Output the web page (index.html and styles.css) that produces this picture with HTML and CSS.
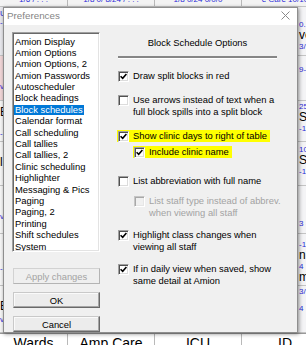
FILE: index.html
```html
<!DOCTYPE html>
<html>
<head>
<meta charset="utf-8">
<title>Preferences</title>
<link rel="stylesheet" href="styles.css">
</head>
<body>
<div class="page">
  <div class="row row-top">
    <div class="cell"><span class="sm">1/6 / . . .</span></div>
    <div class="cell"><span class="sm">1/8 0/ 8/24 / . . .</span></div>
    <div class="cell"><span class="sm">1/8 0/24 0/0/0</span></div>
    <div class="cell"><span class="sm">e Care 10/10</span></div>
  </div>
  <div class="row r1">
    <div class="cell c1 grey"><div class="sm pt2">Ur</div><div class="sm">-</div></div>
    <div class="cell"></div><div class="cell"></div>
    <div class="cell c4 p13"><div class="sm">0.</div><div class="big">ve</div><div class="sm">3/3</div></div>
  </div>
  <div class="row r2">
    <div class="cell c1 pink"><div class="sm pt26">v</div></div>
    <div class="cell"></div><div class="cell"></div>
    <div class="cell c4 p9"><div class="sm">9-</div></div>
  </div>
  <div class="row r3">
    <div class="cell c1"><div class="big pt5">E</div><div class="sm pt10">-</div></div>
    <div class="cell"></div><div class="cell"></div>
    <div class="cell c4 p1"><div class="sm">25</div><div class="big">S</div><div class="sm">-1</div></div>
  </div>
  <div class="row r4">
    <div class="cell c1"><div class="big pt14">l</div></div>
    <div class="cell"></div><div class="cell"></div>
    <div class="cell c4 p3"><div class="sm">10</div><div class="big">S</div><div class="sm">-1</div></div>
  </div>
  <div class="row r5">
    <div class="cell c1"><div class="sm pt26">v</div></div>
    <div class="cell"></div><div class="cell"></div>
    <div class="cell c4 p33"><div class="sm">3 -</div></div>
  </div>
  <div class="row r6">
    <div class="cell c1"><div class="sm pt30">-</div></div>
    <div class="cell"></div><div class="cell"></div>
    <div class="cell c4 p6"><div class="sm">-1</div><div class="big">n</div><div class="sm">4</div><div class="big">m</div></div>
  </div>
  <div class="row r7">
    <div class="cell c1"><div class="big pt14">E</div><div class="sm pt2">v</div></div>
    <div class="cell"></div><div class="cell"></div>
    <div class="cell c4 p1"><div class="sm">3/3</div><div class="sm pt8">4</div></div>
  </div>
  <div class="row row-bottom">
    <div class="cell"><span class="big2">Wards</span></div>
    <div class="cell"><span class="big2">Amp Care</span></div>
    <div class="cell"><span class="big2">ICU</span></div>
    <div class="cell"><span class="big2">ID</span></div>
  </div>
</div>

<div class="dialog">
  <div class="titlebar">
    <span class="title">Preferences</span>
    <svg class="close" width="9" height="9" viewBox="0 0 9 9"><path d="M0.5 0.5 L8.5 8.5 M8.5 0.5 L0.5 8.5" stroke="#8a8a8a" stroke-width="1" fill="none"/></svg>
  </div>
  <div class="dbody">
    <div class="left">
      <ul class="list">
        <li><span>Amion Display</span></li>
        <li><span>Amion Options</span></li>
        <li><span>Amion Options, 2</span></li>
        <li><span>Amion Passwords</span></li>
        <li><span>Autoscheduler</span></li>
        <li><span>Block headings</span></li>
        <li class="sel"><span>Block schedules</span></li>
        <li><span>Calendar format</span></li>
        <li><span>Call scheduling</span></li>
        <li><span>Call tallies</span></li>
        <li><span>Call tallies, 2</span></li>
        <li><span>Clinic scheduling</span></li>
        <li><span>Highlighter</span></li>
        <li><span>Messaging &amp; Pics</span></li>
        <li><span>Paging</span></li>
        <li><span>Paging, 2</span></li>
        <li><span>Printing</span></li>
        <li><span>Shift schedules</span></li>
        <li><span>System</span></li>
      </ul>
      <button class="btn btn-first disabled">Apply changes</button>
      <button class="btn">OK</button>
      <button class="btn">Cancel</button>
    </div>
    <div class="right">
      <div class="heading">Block Schedule Options</div>
      <div class="sep"></div>

      <div class="opt mt11"><span class="cb"><svg width="7" height="7" viewBox="0 0 7 7"><path d="M0.6 3.2 L2.7 5.3 L6.4 1.0" fill="none" stroke="#000" stroke-width="1.6"/></svg></span><span class="lbl">Draw split blocks in red</span></div>

      <div class="opt mt12"><span class="cb"></span><span class="lbl">Use arrows instead of text when a<br>full block spills into a split block</span></div>

      <div class="opt mt12 hl"><span class="cb"><svg width="7" height="7" viewBox="0 0 7 7"><path d="M0.6 3.2 L2.7 5.3 L6.4 1.0" fill="none" stroke="#000" stroke-width="1.6"/></svg></span><span class="lbl">Show clinic days to right of table</span></div>

      <div class="opt mt4 sub hl"><span class="cb"><svg width="7" height="7" viewBox="0 0 7 7"><path d="M0.6 3.2 L2.7 5.3 L6.4 1.0" fill="none" stroke="#000" stroke-width="1.6"/></svg></span><span class="lbl">Include clinic name</span></div>

      <div class="opt mt17"><span class="cb"></span><span class="lbl">List abbreviation with full name</span></div>

      <div class="opt mt8 sub dis"><span class="cb"></span><span class="lbl">List staff type instead of abbrev.<br>when viewing all staff</span></div>

      <div class="opt mt10"><span class="cb"><svg width="7" height="7" viewBox="0 0 7 7"><path d="M0.6 3.2 L2.7 5.3 L6.4 1.0" fill="none" stroke="#000" stroke-width="1.6"/></svg></span><span class="lbl">Highlight class changes when<br>viewing all staff</span></div>

      <div class="opt mt10"><span class="cb"><svg width="7" height="7" viewBox="0 0 7 7"><path d="M0.6 3.2 L2.7 5.3 L6.4 1.0" fill="none" stroke="#000" stroke-width="1.6"/></svg></span><span class="lbl">If in daily view when saved, show<br>same detail at Amion</span></div>
    </div>
  </div>
</div>
</body>
</html>
```

FILE: styles.css
```css
* { box-sizing: border-box; }
html, body { margin: 0; padding: 0; }
body {
  width: 306px;
  height: 345px;
  overflow: hidden;
  position: relative;
  font-family: "Liberation Sans", Arial, sans-serif;
  background: #fff;
}

/* background schedule page */
.page {
  width: 306px;
  height: 345px;
  overflow: hidden;
  display: flex;
  flex-direction: column;
  background: #f7f7f7;
}
.row {
  display: grid;
  grid-template-columns: 68px 87px 87px 87px;
  border-bottom: 1px solid #c4c4c4;
  flex: none;
}
.cell {
  border-right: 1px solid #b9b9b9;
  overflow: hidden;
  white-space: nowrap;
}
.row-top { height: 7px; background: #f3f3f3; }
.row-top .cell { text-align: center; }
.row-top .sm { display: block; margin-top: -5px; line-height: 10px; }
.r1 { height: 49px; }
.r2 { height: 45px; }
.r3 { height: 41px; }
.r4 { height: 44px; }
.r5 { height: 48px; }
.r6 { height: 52px; }
.r7 { height: 47px; }
.row-bottom { height: 30px; background: #fff; border-top: 1px solid #9a9a9a; }
.row-bottom .cell { text-align: center; }

.sm { font-size: 8px; line-height: 9px; color: #2a2ad8; }
.big { font-size: 12px; line-height: 13px; color: #000; }
.big2 { font-size: 14px; line-height: 16px; color: #000; }

.c1 { padding-left: 0; }
.grey { background: #e9e9ee; }
.pink { background: #f2d7d9; }
.c4 { padding-left: 57px; background: #f4f4f6; }
.p1 { padding-top: 1px; }
.p3 { padding-top: 3px; }
.p6 { padding-top: 6px; }
.p9 { padding-top: 9px; }
.p13 { padding-top: 13px; }
.p33 { padding-top: 33px; }
.pt2 { margin-top: 2px; }
.pt5 { margin-top: 5px; }
.pt8 { margin-top: 8px; }
.pt10 { margin-top: 10px; }
.pt14 { margin-top: 14px; }
.pt26 { margin-top: 26px; }
.pt30 { margin-top: 30px; }

/* dialog window */
.dialog {
  position: absolute;
  left: 3px;
  top: 7px;
  width: 295px;
  height: 326px;
  border: 1px solid #8e8e8e;
  background: #f0f0f0;
  box-shadow: 1px 1px 4px rgba(0, 0, 0, 0.45);
  display: flex;
  flex-direction: column;
  font-size: 9.4px;
  color: #000;
}
.titlebar {
  height: 17px;
  padding: 0 7px 3px 3px;
  background: #fff;
  display: flex;
  align-items: center;
  justify-content: space-between;
  flex: none;
}
.title { font-size: 9.8px; color: #858585; }
.close { display: block; }

.dbody {
  flex: 1;
  display: flex;
  padding: 7px 0 0 8px;
}
.left {
  width: 88px;
  display: flex;
  flex-direction: column;
  flex: none;
}
.list {
  list-style: none;
  margin: 0;
  padding: 2px 0 0 0;
  height: 220px;
  overflow: hidden;
  background: #fff;
  border: 1px solid;
  border-color: #a0a0a0 #ffffff #ffffff #a0a0a0;
  box-shadow: inset 1px 1px 0 #696969, inset -1px -1px 0 #e3e3e3;
}
.list li {
  height: 11.4px;
  line-height: 11.4px;
  padding-left: 1px;
  white-space: nowrap;
}
.list li span {
  display: inline-block;
  padding: 0 1px;
  line-height: 10px;
  vertical-align: middle;
}
.list li.sel span { background: #0078d7; color: #fff; }

.btn {
  display: block;
  width: 87px;
  height: 16px;
  margin: 8px 0 0 1px;
  padding: 0;
  font-family: inherit;
  font-size: 9.4px;
  color: #000;
  background: #ececec;
  border: 1px solid;
  border-color: #c9c9c9 #696969 #696969 #c9c9c9;
  box-shadow: inset -1px -1px 0 #a6a6a6, inset 1px 1px 0 #fafafa;
}
.btn-first { margin-top: 16px; }
.btn.disabled {
  color: #a3a3a3;
  background: #efefef;
  border-color: #d2d2d2 #b4b4b4 #b4b4b4 #d2d2d2;
  box-shadow: none;
}

.right {
  margin-left: 17px;
  width: 161px;
  display: flex;
  flex-direction: column;
  align-items: flex-start;
}
.heading {
  align-self: stretch;
  text-align: center;
  margin-top: 5px;
  line-height: 12px;
}
.sep {
  align-self: stretch;
  margin: 7px 1px 0;
  height: 3px;
  border-top: 2px solid #868686;
  border-bottom: 1px solid #ffffff;
}

.opt {
  display: flex;
  align-items: flex-start;
  padding: 0 2px 0 1px;
  line-height: 12px;
  white-space: nowrap;
}
.cb {
  width: 11px;
  height: 11px;
  margin-top: 0.5px;
  flex: none;
  background: #fff;
  border: 1px solid;
  border-color: #a0a0a0 #ffffff #ffffff #a0a0a0;
  box-shadow: inset 1px 1px 0 #505050, inset -1px -1px 0 #dcdcdc;
  display: flex;
  align-items: center;
  justify-content: center;
}
.lbl { margin-left: 4px; }
.sub { margin-left: 16px; }
.hl { background: #ffff00; padding-right: 3px; }
.dis .lbl { color: #a3a3a3; }
.dis .cb {
  background: #f0f0f0;
  border-color: #c6c6c6 #ffffff #ffffff #c6c6c6;
  box-shadow: inset 1px 1px 0 #a8a8a8, inset -1px -1px 0 #e6e6e6;
}

.mt4 { margin-top: 4px; }
.mt8 { margin-top: 8px; }
.mt10 { margin-top: 10px; }
.mt11 { margin-top: 11px; }
.mt12 { margin-top: 12px; }
.mt17 { margin-top: 17px; }
```
